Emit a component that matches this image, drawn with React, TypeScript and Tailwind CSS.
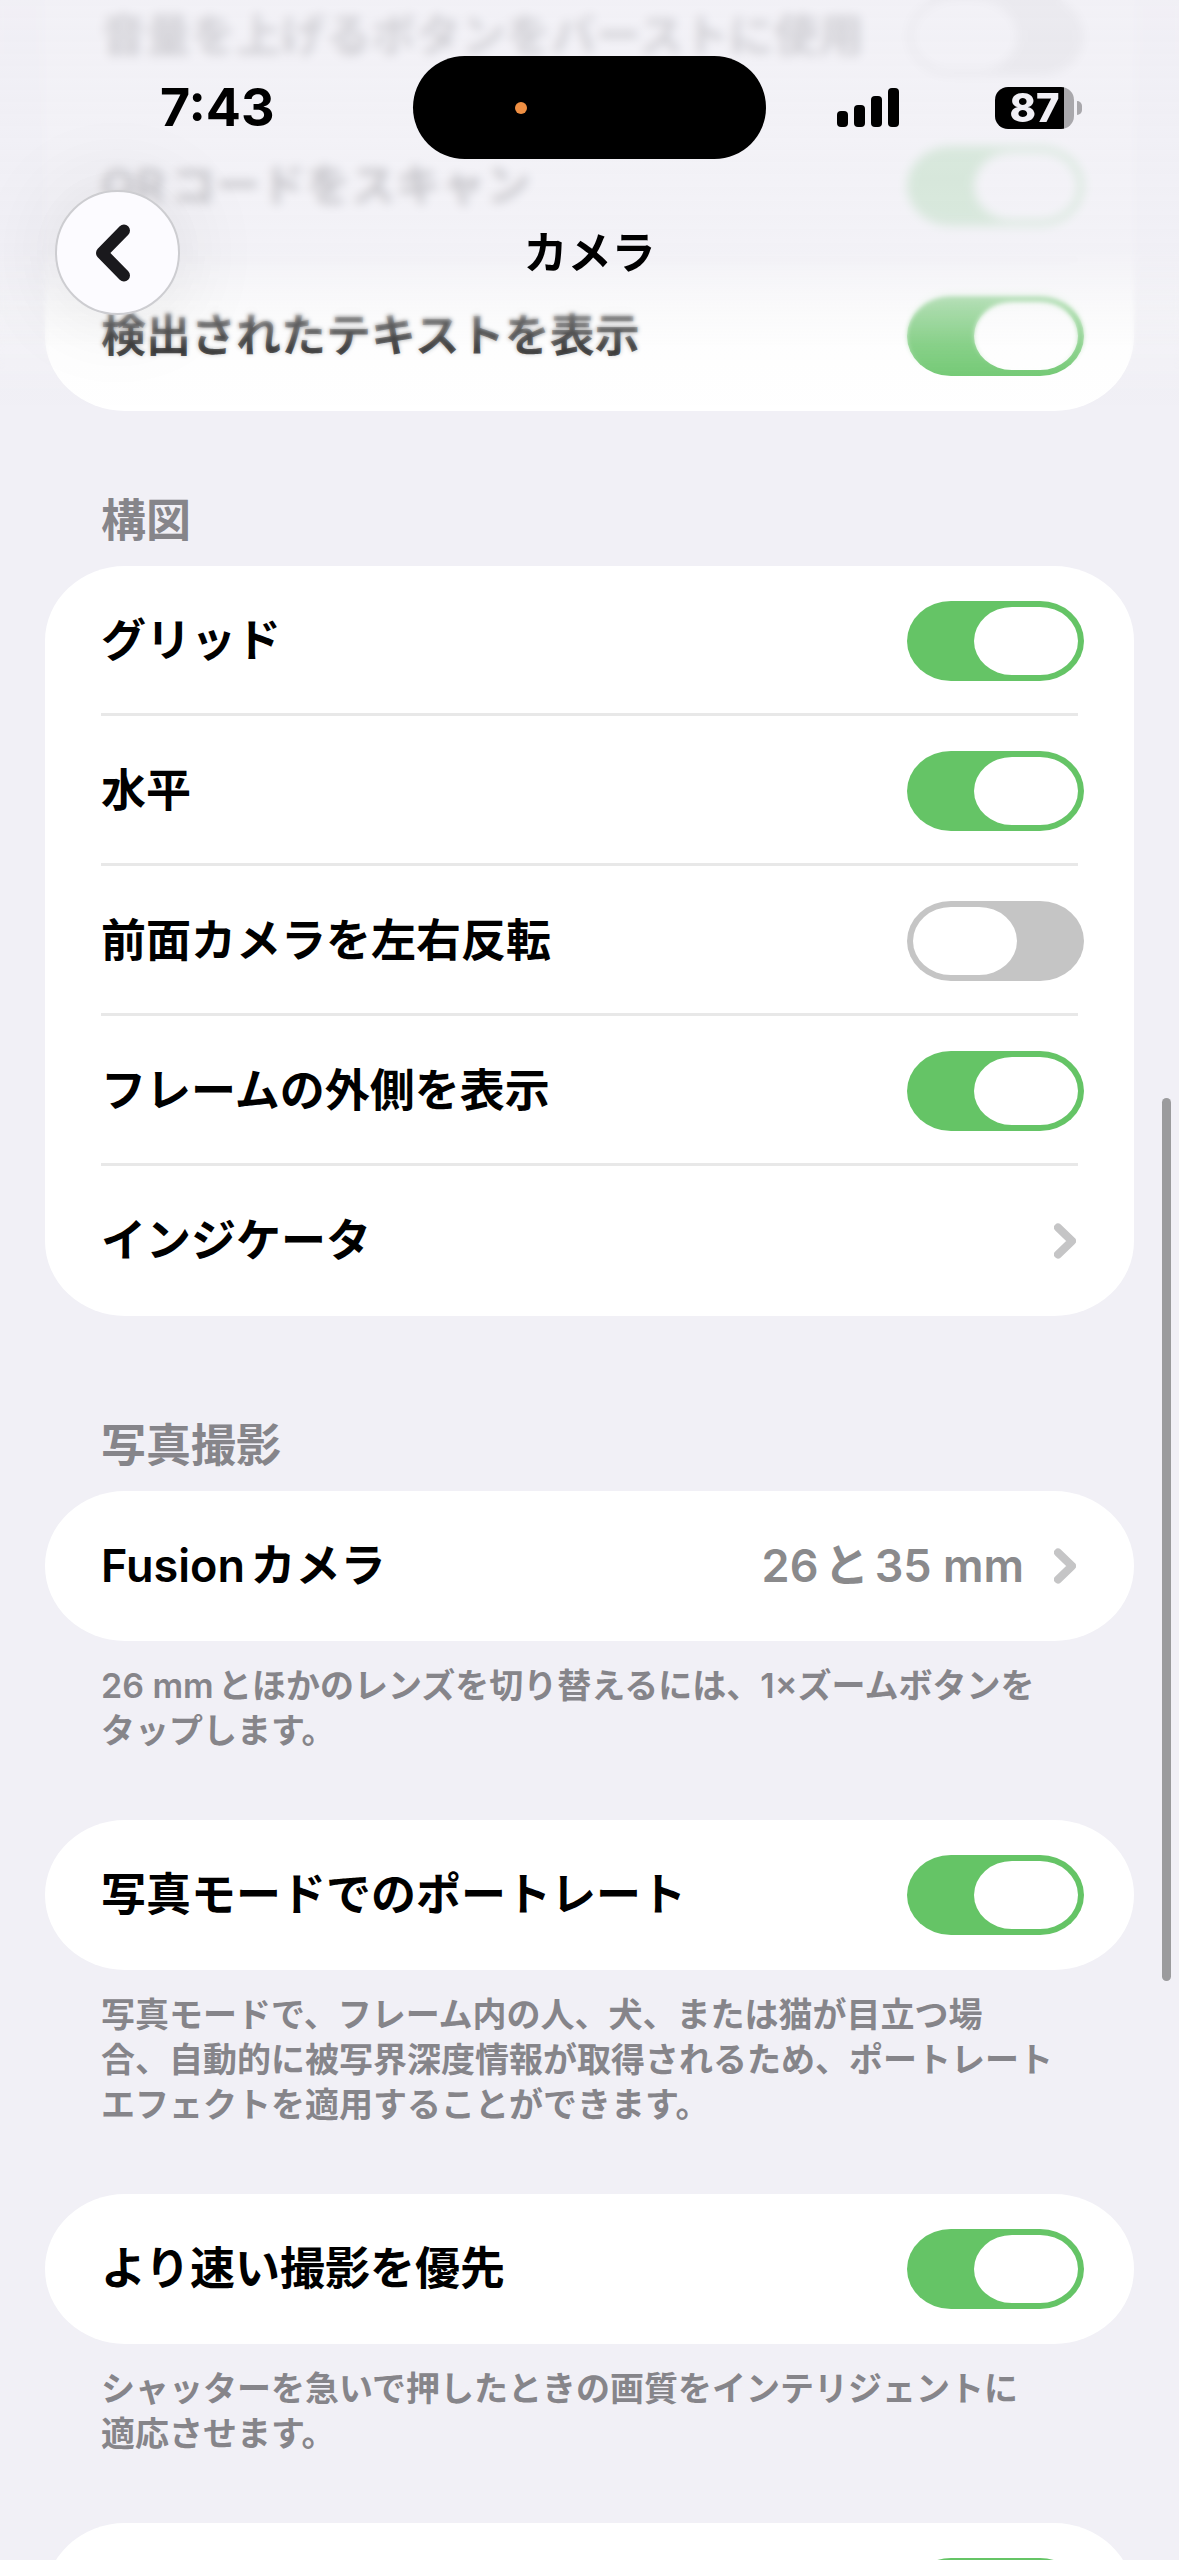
import { Fragment, useId, type ReactNode } from "react";

function Chevron() {
  return (
    <svg viewBox="0 0 22 36" className="mr-2 h-9 w-[22px] shrink-0" fill="none" stroke="#c5c5c6" strokeWidth="8" strokeLinecap="round" strokeLinejoin="round">
      <path d="M4 4.5 18 18 4 31.5" />
    </svg>
  );
}

function Switch({ id, label, on = true }: { id?: string; label?: string; on?: boolean }) {
  return (
    <input
      id={id}
      type="checkbox"
      role="switch"
      aria-label={label}
      defaultChecked={on}
      className="flex h-20 w-[177px] shrink-0 appearance-none items-center rounded-[44px/40px] bg-[#c5c5c5] px-[6px] before:h-[68px] before:w-[104px] before:rounded-[38px/34px] before:bg-white before:content-[''] checked:justify-end checked:bg-[#65c466]"
    />
  );
}

function ToggleRow({ label, on }: { label: string; on?: boolean }) {
  const id = useId();
  return (
    <div className="flex h-[150px] items-center justify-between pr-[50px] pl-[56px]">
      <label htmlFor={id} className="text-[45px] leading-[60px] font-semibold">
        {label}
      </label>
      <Switch id={id} on={on} />
    </div>
  );
}

function LinkRow({ label, value }: { label: string; value?: string }) {
  return (
    <a href="#" className="flex h-[150px] items-center gap-[30px] pr-[50px] pl-[56px] text-[45px] leading-[60px] font-semibold">
      <span className="flex-1">{label}</span>
      {value && <span className="text-[#8a8a8c]">{value}</span>}
      <Chevron />
    </a>
  );
}

function Card({ children }: { children: ReactNode }) {
  return <div className="rounded-[80px/75px] bg-white">{children}</div>;
}

function Divider() {
  return <div className="mx-[56px] -mt-[3px] h-[3px] bg-[#e8e8e8]" />;
}

function SectionTitle({ children }: { children: ReactNode }) {
  return <h2 className="px-[56px] pb-[15px] text-[45px] leading-[60px] font-bold text-[#86858a]">{children}</h2>;
}

function Footnote({ lines }: { lines: string[] }) {
  return (
    <p className="px-[56px] pt-[22px] pb-[67px] text-[34px] leading-[45px] font-semibold text-[#86858a]">
      {lines.map((line, i) => (
        <Fragment key={line}>
          {i > 0 && <br />}
          {line}
        </Fragment>
      ))}
    </p>
  );
}

function StatusBar() {
  return (
    <div className="grid grid-cols-[1fr_353px_1fr] items-center pt-14">
      <div className="pl-[160px] text-[52px] leading-[60px] font-bold">7:43</div>
      <div className="flex h-[103px] items-center rounded-[52px] bg-black pl-[102px]">
        <span className="size-3 rounded-full bg-[#ef8f43]" />
      </div>
      <div className="flex items-center justify-between pr-[97px] pl-[71px]">
        <svg viewBox="0 0 62 39" className="h-[39px] w-[62px]">
          <rect x="0" y="23" width="11" height="16" rx="4" />
          <rect x="17" y="17" width="11" height="22" rx="4" />
          <rect x="34" y="8" width="11" height="31" rx="4" />
          <rect x="51" y="0" width="11" height="39" rx="4" />
        </svg>
        <div className="flex items-center gap-[3px]">
          <div className="flex h-[42px] w-[79px] items-center justify-center rounded-[13px] bg-[linear-gradient(90deg,#000_69px,#a9a8ac_69px)] text-[40px] leading-[42px] font-extrabold text-[#f0eff5]">
            87
          </div>
          <span className="h-[14px] w-[5px] rounded-r-full bg-[#a9a8ac]" />
        </div>
      </div>
    </div>
  );
}

function Header() {
  return (
    <header className="absolute inset-x-0 top-0 h-[411px]">
      {/* fading blur under the bar: strong at the top, sharp again at the lower edge */}
      <div className="absolute inset-0 backdrop-blur-[5px] [mask-image:linear-gradient(#000_230px,transparent_320px)]" />
      <div className="absolute inset-0 backdrop-blur-[2px] [mask-image:linear-gradient(#000_310px,transparent_370px)]" />
      <div className="absolute inset-0 bg-[linear-gradient(rgba(240,239,245,0.88)_0px,rgba(240,239,245,0.82)_180px,rgba(240,239,245,0.84)_250px,rgba(244,244,246,0.5)_305px,rgba(248,248,249,0.24)_345px,rgba(250,250,251,0)_405px)]" />
      <div className="relative">
        <StatusBar />
        <div className="mt-[31px] grid grid-cols-[1fr_auto_1fr] items-center px-[55px]">
          <button
            type="button"
            aria-label="戻る"
            className="flex size-[125px] items-center justify-center rounded-full border-2 border-[#cdcdd1] bg-[#fcfbff] shadow-[0_0_90px_rgba(0,0,0,0.1)]"
          >
            <svg viewBox="0 0 36 58" className="mr-[10px] h-[58px] w-9" fill="none" stroke="#1a191d" strokeWidth="12" strokeLinecap="round" strokeLinejoin="round">
              <path d="M29 6.5 7 29 29 51.5" />
            </svg>
          </button>
          <h1 className="text-[44px] leading-[60px] font-bold">カメラ</h1>
        </div>
      </div>
    </header>
  );
}

export default function App() {
  return (
    <div
      lang="ja"
      className="relative h-screen overflow-hidden bg-[#f1f0f6] font-['Inter','Noto_Sans_CJK_JP',sans-serif] text-black [text-autospace:normal]"
    >
      <main className="-mt-[39px] px-[45px]">
        <div className="rounded-b-[80px_75px] bg-white">
          <ToggleRow label="音量を上げるボタンをバーストに使用" on={false} />
          <Divider />
          <ToggleRow label="QRコードをスキャン" />
          <Divider />
          <ToggleRow label="検出されたテキストを表示" />
        </div>

        <section className="pt-20">
          <SectionTitle>構図</SectionTitle>
          <Card>
            <ToggleRow label="グリッド" />
            <Divider />
            <ToggleRow label="水平" />
            <Divider />
            <ToggleRow label="前面カメラを左右反転" on={false} />
            <Divider />
            <ToggleRow label="フレームの外側を表示" />
            <Divider />
            <LinkRow label="インジケータ" />
          </Card>
        </section>

        <section className="pt-[100px]">
          <SectionTitle>写真撮影</SectionTitle>
          <Card>
            <LinkRow label="Fusionカメラ" value="26と35 mm" />
          </Card>
          <Footnote lines={["26 mmとほかのレンズを切り替えるには、1×ズームボタンを", "タップします。"]} />
          <Card>
            <ToggleRow label="写真モードでのポートレート" />
          </Card>
          <Footnote
            lines={[
              "写真モードで、フレーム内の人、犬、または猫が目立つ場",
              "合、自動的に被写界深度情報が取得されるため、ポートレート",
              "エフェクトを適用することができます。",
            ]}
          />
          <Card>
            <ToggleRow label="より速い撮影を優先" />
          </Card>
          <Footnote lines={["シャッターを急いで押したときの画質をインテリジェントに", "適応させます。"]} />
          <Card>
            <div className="flex h-[150px] items-center justify-end pr-[50px]">
              <Switch label="レンズ補正" />
            </div>
          </Card>
        </section>
      </main>

      <Header />
      <div className="absolute top-[1098px] right-2 h-[883px] w-[9px] rounded-full bg-[#9b9b9d]" />
    </div>
  );
}
